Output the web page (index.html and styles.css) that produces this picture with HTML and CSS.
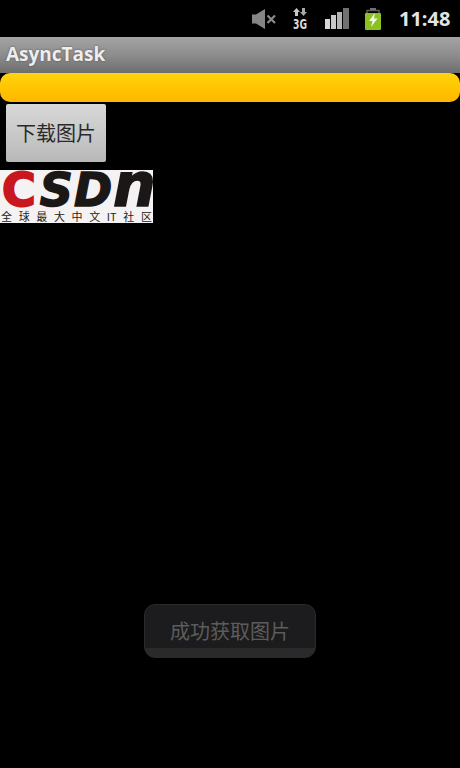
FILE: index.html
```html
<!DOCTYPE html>
<html lang="zh">
<head>
<meta charset="utf-8">
<title>AsyncTask</title>
<link rel="stylesheet" href="styles.css">
</head>
<body>
<div class="screen">
  <div class="status">
    <svg class="ic-sound" width="24" height="20" viewBox="0 0 24 20">
      <path d="M0 5.500h4l9-5.500v20l-9-5.500H0z" fill="#858585"/>
      <path d="M15.500 6.500l7.500 7.500M23 6.500l-7.500 7.500" stroke="#8a8a8a" stroke-width="2.200" fill="none"/>
    </svg>
    <svg class="ic-3g" width="14" height="21" viewBox="0 0 14 21">
      <path d="M3.500 0L7 4H5V8H2V4H0z" fill="#c8c8c8"/>
      <path d="M10.500 8L7 4H9V0h3v4h2z" fill="#a8a8a8"/>
      <text x="0" y="20.500" class="g3" textLength="14" lengthAdjust="spacingAndGlyphs">3G</text>
    </svg>
    <svg class="ic-signal" width="24" height="21" viewBox="0 0 24 21">
      <rect x="0" y="11" width="5" height="10" fill="#d8d8d8"/>
      <rect x="6" y="7" width="5" height="14" fill="#c8c8c8"/>
      <rect x="12" y="4" width="5" height="17" fill="#b4b4b4"/>
      <rect x="18" y="0" width="6" height="21" fill="#707070"/>
    </svg>
    <svg class="ic-batt" width="16" height="22" viewBox="0 0 16 22">
      <path d="M2 6V2.500h12V6" stroke="#5c5c5c" stroke-width="1.500" fill="none"/>
      <rect x="5" y="0" width="6" height="2" fill="#707070"/>
      <rect x="0" y="5" width="16" height="17" rx="1" fill="#8cc21e"/>
      <path d="M10 5L4 13h3.500L6 19l6.500-8.500H9z" fill="#f4f8e8"/>
    </svg>
    <span class="time">11:48</span>
  </div>
  <div class="titlebar">AsyncTask</div>
  <div class="progress"></div>
  <button class="btn" type="button">下载图片</button>
  <div class="logo">
    <div class="logo-mark"><span class="logo-c">C</span>SD<span class="logo-n">n</span></div>
    <div class="logo-sub"><span>全</span><span>球</span><span>最</span><span>大</span><span>中</span><span>文</span><span>IT</span><span>社</span><span>区</span></div>
  </div>
  <div class="toast">成功获取图片</div>
</div>
</body>
</html>
```
FILE: styles.css
```css
* { box-sizing: border-box; }
html, body { margin: 0; padding: 0; background: #000; }
.screen {
  position: relative;
  width: 460px;
  height: 768px;
  background: #000;
  overflow: hidden;
  display: flex;
  flex-direction: column;
  align-items: flex-start;
  font-family: "Open Sans", "Noto Sans CJK SC", sans-serif;
}
.status {
  width: 100%;
  height: 37px;
  flex: none;
  display: flex;
  align-items: center;
  padding-right: 10px;
  justify-content: flex-end;
}
.ic-sound { margin-right: 17px; }
.ic-3g { margin-right: 18px; }
.ic-signal { margin-right: 16px; }
.ic-batt { margin-right: 18px; }
.g3 {
  font-family: "DejaVu Sans", sans-serif;
  font-weight: 700;
  font-size: 14px;
  fill: #d8d8d8;
}
.time {
  color: #e4e4e4;
  font-size: 20px;
  font-weight: 700;
  line-height: 36px;
  width: 51px;
  white-space: nowrap;
}
.titlebar {
  width: 100%;
  height: 36px;
  flex: none;
  background: linear-gradient(#a4a4a4, #8d8d8d 50%, #6e6e6e);
  color: #eee;
  font-size: 19px;
  font-weight: 700;
  line-height: 35px;
  padding-left: 6px;
  text-shadow: 0 0 2px rgba(60, 60, 60, .8);
}
.progress {
  width: 100%;
  height: 29px;
  flex: none;
  border-radius: 10px;
  background: linear-gradient(#ffd40f, #ffc400 55%, #ffb700);
}
.btn {
  width: 100px;
  height: 58px;
  flex: none;
  margin: 2px 0 0 6px;
  padding: 0;
  border: 0;
  border-radius: 2px;
  background: linear-gradient(#d8d8d8, #c8c8c8 55%, #b8b8b8);
  color: #2a2a2a;
  font-family: "Noto Sans CJK SC", sans-serif;
  font-size: 20px;
  line-height: 58px;
}
.logo {
  width: 153px;
  height: 53px;
  flex: none;
  margin-top: 8px;
  background: #f4f2f2;
  display: flex;
  flex-direction: column;
}
.logo-mark {
  height: 39px;
  flex: none;
  font-family: "DejaVu Sans", sans-serif;
  font-weight: 700;
  font-style: italic;
  font-size: 46px;
  line-height: 39px;
  letter-spacing: 1px;
  color: #1c1717;
  -webkit-text-stroke: 1.500px #1c1717;
  white-space: nowrap;
}
.logo-c {
  color: #c8171e;
  -webkit-text-stroke: 2px #c8171e;
  font-style: normal;
  margin-left: 2px;
  margin-right: 3px;
}
.logo-n { font-size: 60px; line-height: 30px; letter-spacing: 0; }
.logo-sub {
  display: flex;
  justify-content: space-between;
  padding: 0 1px 0 1px;
  font-family: "Noto Sans CJK SC", sans-serif;
  font-size: 11px;
  line-height: 14px;
  color: #222;
}
.toast {
  position: absolute;
  left: 144px;
  top: 604px;
  width: 172px;
  height: 54px;
  border: 1px solid #2a2a2a;
  border-radius: 11px;
  background: linear-gradient(#1c1c1e 0, #1c1c1e 82%, #2a2a2a 82%, #2a2a2a 100%);
  color: #5c5c5c;
  font-family: "Noto Sans CJK SC", sans-serif;
  font-size: 20px;
  line-height: 52px;
  text-align: center;
}
```
